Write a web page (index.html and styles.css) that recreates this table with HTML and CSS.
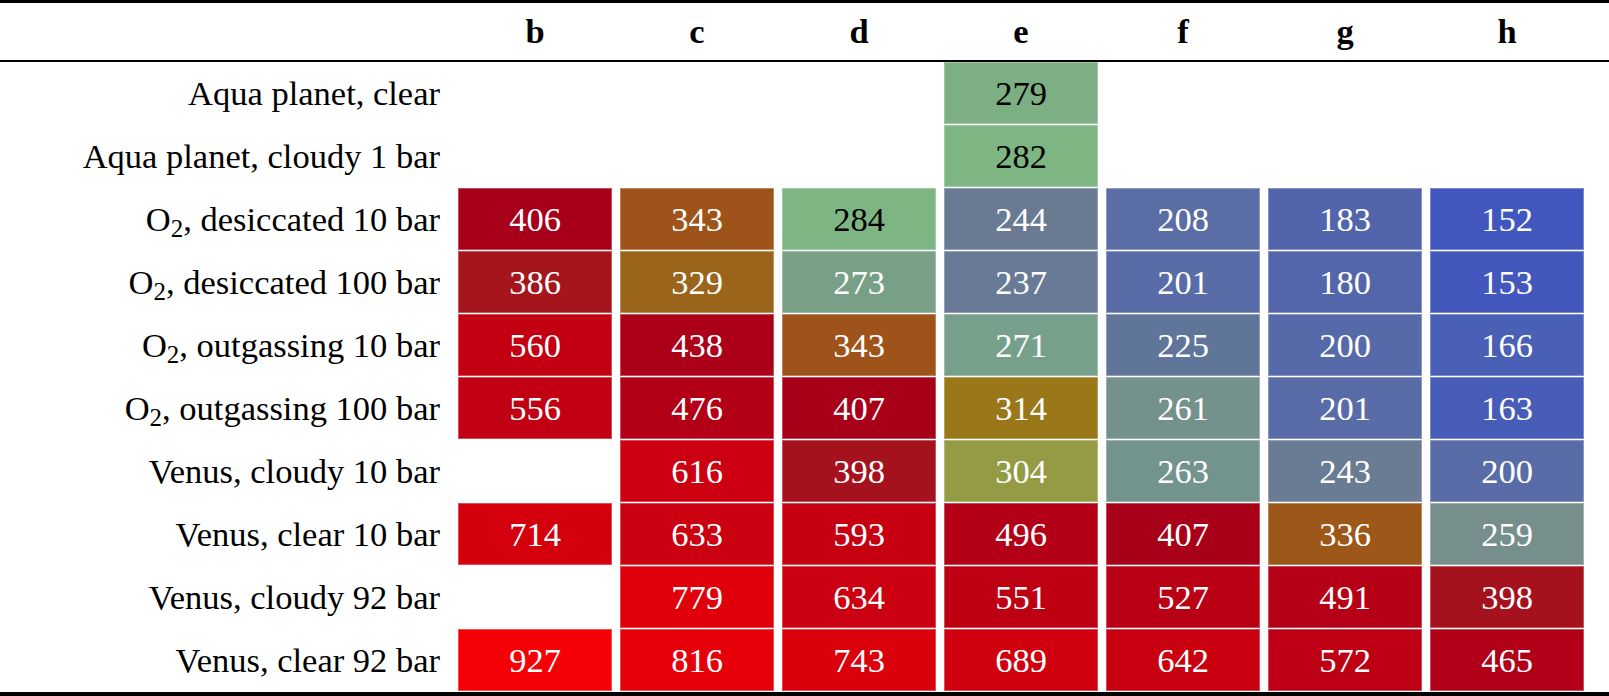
FILE: index.html
```html
<!DOCTYPE html>
<html>
<head>
<meta charset="utf-8">
<link rel="stylesheet" href="styles.css">
</head>
<body>
<div class="table">
  <div class="row head">
    <div class="label"></div>
    <div class="h">b</div><div class="h">c</div><div class="h">d</div><div class="h">e</div><div class="h">f</div><div class="h">g</div><div class="h">h</div>
  </div>
  <div class="row">
    <div class="label">Aqua planet, clear</div>
    <div></div><div></div><div></div>
    <div class="cell dark" style="background:#7caf84">279</div>
    <div></div><div></div><div></div>
  </div>
  <div class="row">
    <div class="label">Aqua planet, cloudy 1 bar</div>
    <div></div><div></div><div></div>
    <div class="cell dark" style="background:#7db683">282</div>
    <div></div><div></div><div></div>
  </div>
  <div class="row">
    <div class="label">O<sub>2</sub>, desiccated 10 bar</div>
    <div class="cell" style="background:#a8001a">406</div>
    <div class="cell" style="background:#9d531a">343</div>
    <div class="cell dark" style="background:#7db683">284</div>
    <div class="cell" style="background:#6a7a92">244</div>
    <div class="cell" style="background:#5b6da5">208</div>
    <div class="cell" style="background:#5264ab">183</div>
    <div class="cell" style="background:#4257bd">152</div>
  </div>
  <div class="row">
    <div class="label">O<sub>2</sub>, desiccated 100 bar</div>
    <div class="cell" style="background:#a6151c">386</div>
    <div class="cell" style="background:#9a651a">329</div>
    <div class="cell" style="background:#77a087">273</div>
    <div class="cell" style="background:#687a96">237</div>
    <div class="cell" style="background:#5a6ca8">201</div>
    <div class="cell" style="background:#5466ab">180</div>
    <div class="cell" style="background:#4358bc">153</div>
  </div>
  <div class="row">
    <div class="label">O<sub>2</sub>, outgassing 10 bar</div>
    <div class="cell" style="background:#c20012">560</div>
    <div class="cell" style="background:#ab0018">438</div>
    <div class="cell" style="background:#9d531a">343</div>
    <div class="cell" style="background:#77a08b">271</div>
    <div class="cell" style="background:#60759a">225</div>
    <div class="cell" style="background:#5669a8">200</div>
    <div class="cell" style="background:#4a5fb6">166</div>
  </div>
  <div class="row">
    <div class="label">O<sub>2</sub>, outgassing 100 bar</div>
    <div class="cell" style="background:#c10013">556</div>
    <div class="cell" style="background:#b30017">476</div>
    <div class="cell" style="background:#a9001a">407</div>
    <div class="cell" style="background:#9a7718">314</div>
    <div class="cell" style="background:#74918c">261</div>
    <div class="cell" style="background:#5a6ca8">201</div>
    <div class="cell" style="background:#475cb7">163</div>
  </div>
  <div class="row">
    <div class="label">Venus, cloudy 10 bar</div>
    <div></div>
    <div class="cell" style="background:#cc0010">616</div>
    <div class="cell" style="background:#a5111c">398</div>
    <div class="cell" style="background:#959a45">304</div>
    <div class="cell" style="background:#73938d">263</div>
    <div class="cell" style="background:#6a7b94">243</div>
    <div class="cell" style="background:#5a6ca8">200</div>
  </div>
  <div class="row">
    <div class="label">Venus, clear 10 bar</div>
    <div class="cell" style="background:#d4000e">714</div>
    <div class="cell" style="background:#cb0010">633</div>
    <div class="cell" style="background:#c60011">593</div>
    <div class="cell" style="background:#b40017">496</div>
    <div class="cell" style="background:#a9001a">407</div>
    <div class="cell" style="background:#9c5719">336</div>
    <div class="cell" style="background:#768f8c">259</div>
  </div>
  <div class="row">
    <div class="label">Venus, cloudy 92 bar</div>
    <div></div>
    <div class="cell" style="background:#e0000b">779</div>
    <div class="cell" style="background:#cb0010">634</div>
    <div class="cell" style="background:#be0013">551</div>
    <div class="cell" style="background:#ba0014">527</div>
    <div class="cell" style="background:#b50016">491</div>
    <div class="cell" style="background:#a5111c">398</div>
  </div>
  <div class="row">
    <div class="label">Venus, clear 92 bar</div>
    <div class="cell" style="background:#f50006">927</div>
    <div class="cell" style="background:#e6000a">816</div>
    <div class="cell" style="background:#da000c">743</div>
    <div class="cell" style="background:#d0000f">689</div>
    <div class="cell" style="background:#c90010">642</div>
    <div class="cell" style="background:#bd0013">572</div>
    <div class="cell" style="background:#b10018">465</div>
  </div>
</div>
</body>
</html>
```
FILE: styles.css
```css
html, body {
  margin: 0;
  padding: 0;
  background: #fff;
}
body {
  font-family: "Liberation Serif", "Times New Roman", Times, serif;
  font-size: 34.5px;
  color: #000;
}
.table {
  width: 1609px;
  border-top: 3px solid #000;
  border-bottom: 4px solid #000;
}
.row {
  display: grid;
  grid-template-columns: 450px repeat(7, 154px);
  column-gap: 8px;
  height: 63px;
}
.head {
  height: 57px;
  border-bottom: 2px solid #000;
}
.h {
  font-weight: bold;
  display: flex;
  align-items: center;
  justify-content: center;
}
.label {
  display: flex;
  align-items: center;
  justify-content: flex-end;
  padding-right: 10px;
  white-space: nowrap;
}
.label sub {
  font-size: 25px;
  line-height: 1;
  position: relative;
  top: 9px;
  vertical-align: baseline;
}
.cell {
  height: 62px;
  display: flex;
  align-items: center;
  justify-content: center;
  color: #fff;
  box-shadow: inset 0 0 0 1px rgba(255, 255, 255, 0.3);
}
.cell.dark {
  color: #000;
}
```
